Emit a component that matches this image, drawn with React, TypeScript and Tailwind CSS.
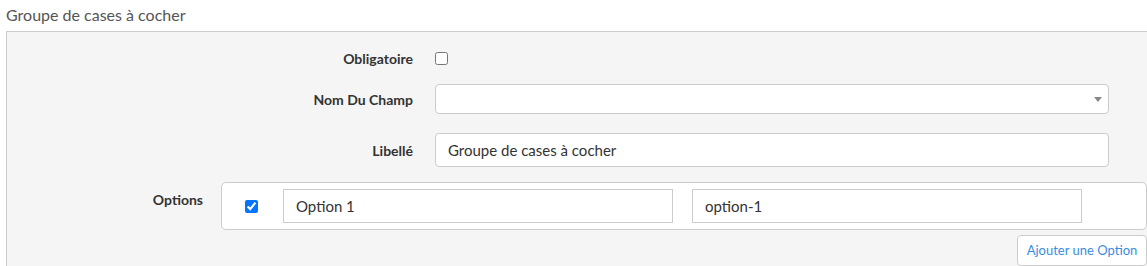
import React, { useState } from "react";

const font = { fontFamily: '"Source Sans Pro", Lato, "Noto Sans", sans-serif' };

export default function App() {
  const [required, setRequired] = useState(false);
  const [label, setLabel] = useState("Groupe de cases à cocher");
  const [options, setOptions] = useState([
    { checked: true, label: "Option 1", value: "option-1" },
  ]);

  const addOption = () => {
    const n = options.length + 1;
    setOptions([
      ...options,
      { checked: false, label: `Option ${n}`, value: `option-${n}` },
    ]);
  };

  return (
    <div
      className="w-[1147px] h-[266px] overflow-hidden bg-white text-[14px] text-[#333]"
      style={font}
    >
      <div className="pl-[6px] pt-[3px] h-[31px] text-[16px] text-[#555]">
        Groupe de cases à cocher
      </div>

      <div className="ml-[6px] w-[1180px] border-l border-t border-[#ccc] bg-[#f5f5f5] pb-4">
        {/* Obligatoire */}
        <div className="flex items-center h-[26px] mt-[13px]">
          <label className="w-[406px] text-right font-bold">Obligatoire</label>
          <input
            type="checkbox"
            checked={required}
            onChange={(e) => setRequired(e.target.checked)}
            className="ml-[22px] m-0 w-[13px] h-[13px]"
          />
        </div>

        {/* Nom du champ */}
        <div className="flex items-center mt-[13px]">
          <label className="w-[406px] text-right font-bold">Nom Du Champ</label>
          <div className="relative ml-[22px] w-[674px] h-[30px]">
            <select className="appearance-none w-full h-full rounded-[4px] border border-[#ccc] bg-white px-3 outline-none">
              <option value=""></option>
            </select>
            <svg
              className="absolute right-[7px] top-[13px]"
              width="8"
              height="5"
              viewBox="0 0 8 5"
            >
              <path d="M0 0 L8 0 L4 5 Z" fill="#888" />
            </svg>
          </div>
        </div>

        {/* Libellé */}
        <div className="flex items-center mt-[19px]">
          <label className="w-[406px] text-right font-bold">Libellé</label>
          <input
            value={label}
            onChange={(e) => setLabel(e.target.value)}
            className="ml-[22px] w-[674px] h-[34px] rounded-[4px] border border-[#ccc] bg-white px-3 text-[15px] outline-none"
          />
        </div>

        {/* Options */}
        <div className="flex items-start mt-[15px]">
          <label className="w-[196px] text-right font-bold pt-[7px]">Options</label>
          <div className="ml-[18px] flex flex-col items-end w-[926px]">
            <div className="w-full rounded-[5px] border border-[#ccc] bg-white py-[6px]">
              {options.map((opt, i) => (
                <div key={i} className="flex items-center h-[34px]">
                  <input
                    type="checkbox"
                    checked={opt.checked}
                    onChange={(e) => {
                      const next = [...options];
                      next[i] = { ...opt, checked: e.target.checked };
                      setOptions(next);
                    }}
                    className="ml-[23px] m-0 w-[13px] h-[13px]"
                  />
                  <input
                    value={opt.label}
                    onChange={(e) => {
                      const next = [...options];
                      next[i] = { ...opt, label: e.target.value };
                      setOptions(next);
                    }}
                    className="ml-[25px] w-[390px] h-[34px] border border-[#ccc] bg-white px-3 text-[15px] outline-none"
                  />
                  <input
                    value={opt.value}
                    onChange={(e) => {
                      const next = [...options];
                      next[i] = { ...opt, value: e.target.value };
                      setOptions(next);
                    }}
                    className="ml-[19px] w-[390px] h-[34px] border border-[#ccc] bg-white px-3 text-[15px] outline-none"
                  />
                </div>
              ))}
            </div>
            <button
              type="button"
              onClick={addOption}
              className="mt-[5px] h-[31px] w-[130px] rounded-[4px] border border-[#ccc] bg-white text-[13px] text-[#3a8dde]"
            >
              Ajouter une Option
            </button>
          </div>
        </div>
      </div>
    </div>
  );
}
